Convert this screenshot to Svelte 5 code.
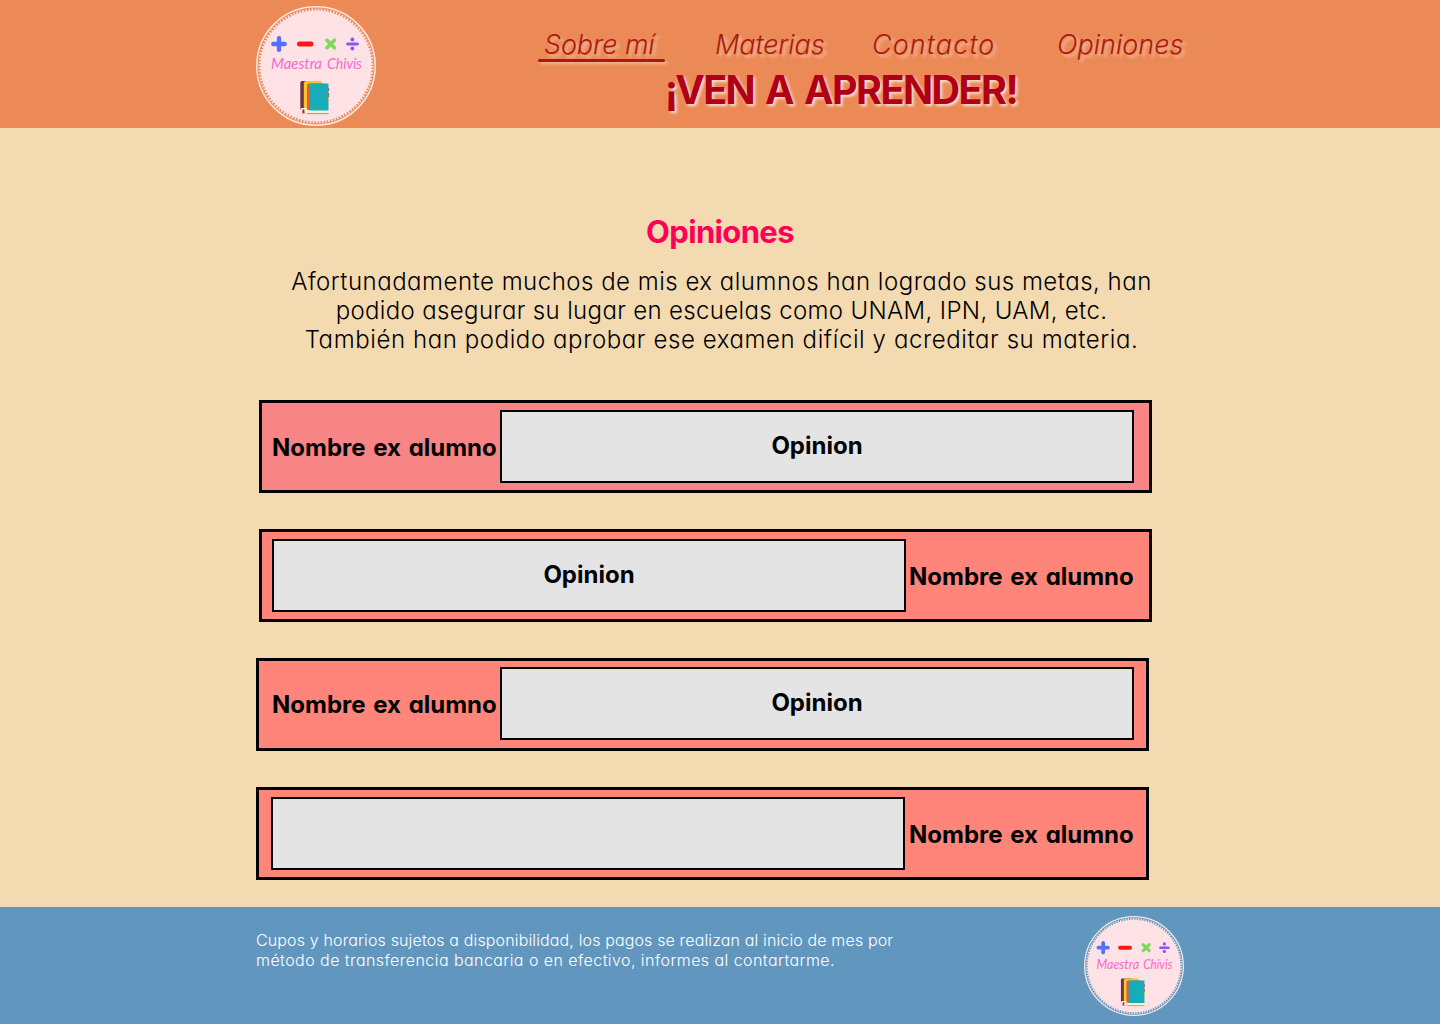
<script>
  const links = ['Sobre mí', 'Materias', 'Contacto', 'Opiniones'];
  const reviews = [
    { name: 'Nombre ex alumno', text: 'Opinion', variant: 'first' },
    { name: 'Nombre ex alumno', text: 'Opinion', variant: 'second' },
    { name: 'Nombre ex alumno', text: 'Opinion', variant: 'third' },
    { name: 'Nombre ex alumno', text: '', variant: 'fourth' }
  ];
</script>

{#snippet logo(size)}
  <svg class="logo" width={size} height={size} viewBox="0 0 120 120" role="img" aria-label="Maestra Chivis">
    <circle cx="60" cy="60" r="59.2" fill="none" stroke="#fde7e3" stroke-width="1.500" />
    <circle cx="60" cy="60" r="55.600" fill="#ffe2e5" />
    <circle cx="60" cy="60" r="56.300" fill="none" stroke="#ffe2e5" stroke-width="2.600" stroke-dasharray="1.600 1.500" />
    <g fill="none" stroke-linecap="round">
      <path d="M17.300 38h11.400M23 32.300v11.400" stroke="#5271ff" stroke-width="4.400" />
      <path d="M43.300 38h11.800" stroke="#ff1616" stroke-width="4.800" />
      <path d="m71 34.300 7.400 7.400m0-7.400-7.400 7.400" stroke="#7ed957" stroke-width="3.700" />
      <path d="M91.600 38h9.800" stroke="#8c52ff" stroke-width="3" />
    </g>
    <circle cx="96.400" cy="33.500" r="1.900" fill="#8c52ff" />
    <circle cx="96.400" cy="42.500" r="1.900" fill="#8c52ff" />
    <text class="script" x="15" y="63.300" textLength="51" lengthAdjust="spacingAndGlyphs">Maestra</text>
    <text class="script" x="71" y="63.300" textLength="35" lengthAdjust="spacingAndGlyphs">Chivis</text>
    <path d="M45.500 75H58v29H44.300V76.500z" fill="#693642" />
    <path d="M49.500 75H65.500v28H47.800V76.500z" fill="#fbc32b" />
    <path d="M44.300 105v-2l1.500-1h6v4.600h-7.500z" fill="#fff0cf" />
    <path d="M46.400 103.500h2v4.500l-1-1-1 1z" fill="#b51f32" />
    <path d="M52.500 77.500h15v28H51V79z" fill="#ef5538" />
    <path d="M51 107.500v-3.500h21.500v3.500z" fill="#fff0cf" />
    <path d="M51 107.600h21.500" stroke="#3b8a78" stroke-width=".7" />
    <path d="M54.500 77.500H72.500v27h-19v-26z" fill="#16acb8" />
    <path d="M72.600 82v3M72.600 87v4" stroke="#a63f42" stroke-width=".8" />
    <path d="M72.600 91v4" stroke="#d5b736" stroke-width=".8" />
  </svg>
{/snippet}

<div class="page">
  <header>
    <div class="wrap top">
      {@render logo(120)}
      <div class="heading">
        <nav>
          {#each links as link, i}
            <a href="#seccion-{i}" class:active={i === 0}>{link}</a>
          {/each}
        </nav>
        <div class="slogan">¡VEN A APRENDER!</div>
      </div>
    </div>
  </header>

  <main>
    <h1>Opiniones</h1>
    <p class="intro">
      <span class="l1">Afortunadamente muchos de mis ex alumnos han logrado sus metas, han</span>
      <span class="l2">podido asegurar su lugar en escuelas como UNAM, IPN, UAM, etc.</span>
      <span class="l3">También han podido aprobar ese examen difícil y acreditar su materia.</span>
    </p>
    <section class="reviews">
      {#each reviews as review}
        <article class={review.variant}>
          <h2>{review.name}</h2>
          <div class="quote">{review.text}</div>
        </article>
      {/each}
    </section>
  </main>

  <footer>
    <div class="wrap bottom">
      <p>
        <span class="f1">Cupos y horarios sujetos a disponibilidad, los pagos se realizan al inicio de mes por</span>
        <span class="f2">método de transferencia bancaria o en efectivo, informes al contartarme.</span>
      </p>
      {@render logo(100)}
    </div>
  </footer>
</div>

<style>
  :global(body) { margin: 0; }
  .page {
    display: flex;
    flex-direction: column;
    width: 1440px;
    height: 1024px;
    overflow: hidden;
    background: #f3dab1;
    color: #000;
    font-family: Inter, Lato, sans-serif;
    /* cv11: single-storey a */
    font-feature-settings: "cv11", "calt" 0;
    white-space: nowrap;
  }
  .page * { box-sizing: border-box; }
  .wrap { width: 928px; margin: 0 auto; display: flex; justify-content: space-between; }
  header { flex: 0 0 128px; background: #ec8a57; }
  .top { padding-top: 6px; }
  .logo { display: block; flex: none; }
  .script {
    font-family: Lato, sans-serif;
    font-style: italic;
    font-size: 15.5px;
    fill: #f968cf;
  }
  .heading { width: 646px; padding-top: 20px; }
  nav { display: grid; grid-template-columns: 171px 157px 185px 133px; height: 38px; }
  nav a {
    display: block;
    justify-self: start;
    height: 37px;
    padding: 0 0 0 6px;
    color: #aa1a11;
    font-size: 27px;
    line-height: 37px;
    font-weight: 300;
    font-style: italic;
    letter-spacing: -0.1px;
    text-decoration: none;
    text-shadow: 3px 3px 3px rgba(255, 255, 255, 0.4);
  }
  nav a:nth-child(3) { letter-spacing: 1.1px; }
  nav a:nth-child(4) { letter-spacing: 0; }
  nav a.active {
    position: relative;
    width: 127px;
  }
  nav a.active::after {
    content: "";
    position: absolute;
    left: 0;
    bottom: 1px;
    width: 127px;
    height: 3px;
    border-radius: 2px;
    background: #aa1a11;
    box-shadow: 2px 2px 3px rgba(255, 255, 255, 0.4);
  }
  .slogan {
    width: 606px;
    text-align: center;
    color: #b00018;
    font-size: 39.5px;
    line-height: 52px;
    font-weight: 700;
    letter-spacing: -1.5px;
    word-spacing: 3px;
    text-shadow: 2px 2px 3px rgba(255, 255, 255, 0.75);
  }
  main { flex: 0 0 779px; padding-top: 84px; }
  h1 {
    margin: 0;
    text-align: center;
    color: #ff0059;
    font-size: 31px;
    line-height: 40px;
    font-weight: 700;
    letter-spacing: -0.65px;
  }
  .intro {
    margin: 15px 0 0 3px;
    text-align: center;
    font-size: 24px;
    line-height: 29px;
    font-weight: 300;
  }
  .intro span, footer span { display: block; }
  .l1 { letter-spacing: 0.5px; }
  .l2 { letter-spacing: 0.35px; }
  .l3 { letter-spacing: 0.59px; }
  .reviews {
    display: flex;
    flex-direction: column;
    gap: 36px;
    width: 896px;
    margin: 46px 0 0 256px;
  }
  article {
    display: flex;
    width: 893px;
    height: 93px;
    border: 3px solid #000;
    background: #ff857b;
    padding: 7px 15px 7px 10px;
  }
  .first { background: #f88585; }
  .first, .second { margin-left: 3px; }
  .third { padding: 6px 12px 8px 13px; }
  .fourth { padding: 7px 12px; }
  .second, .fourth { flex-direction: row-reverse; }
  h2 {
    flex: 1;
    margin: 0;
    line-height: 75px;
    font-size: 24px;
    font-weight: 700;
    letter-spacing: 0;
    word-spacing: 2px;
  }
  .second h2 { padding-left: 3px; }
  .fourth h2 { padding-left: 4px; }
  .quote {
    flex: 0 0 634px;
    height: 73px;
    border: 2px solid #000;
    background: #e4e4e4;
    text-align: center;
    font-size: 24px;
    line-height: 67px;
    font-weight: 700;
    letter-spacing: 0;
  }
  footer { flex: 1; background: #6197bf; color: #fff; }
  .bottom { padding-top: 9px; }
  footer p {
    margin: 14px 0 0;
    font-size: 16px;
    line-height: 20px;
    font-weight: 300;
  }
  .f1 { letter-spacing: 0.14px; }
  .f2 { letter-spacing: 0.44px; }
</style>
